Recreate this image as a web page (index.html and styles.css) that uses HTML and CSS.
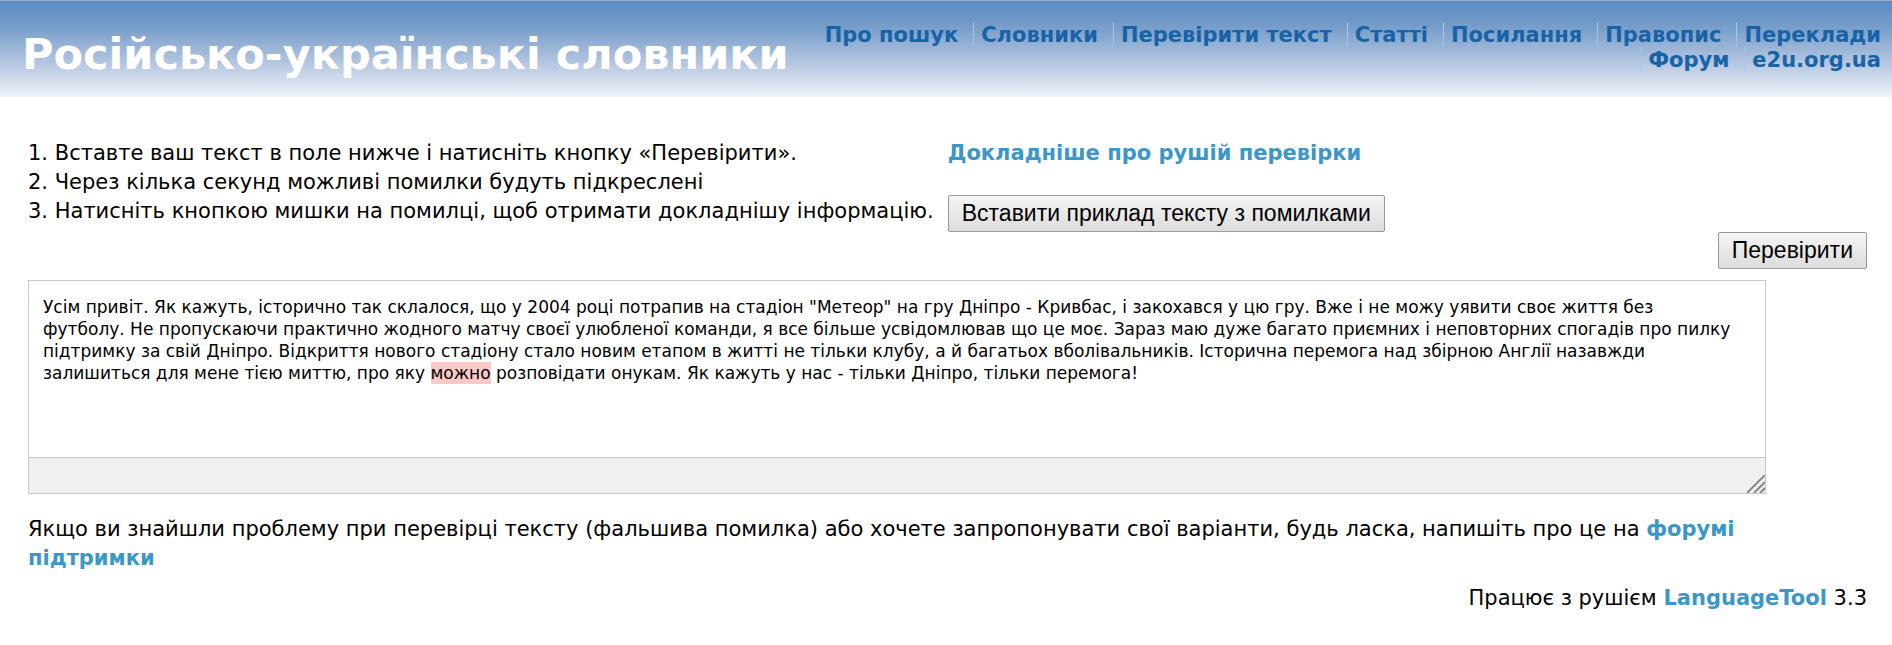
FILE: index.html
```html
<!DOCTYPE html>
<html lang="uk">
<head>
<meta charset="utf-8">
<title>Російсько-українські словники</title>
<link rel="stylesheet" href="styles.css">
</head>
<body>
<header class="header">
  <h1 class="title">Російсько-українські словники</h1>
  <nav class="nav">
    <ul class="nav-list">
      <li class="nav-item"><a href="#about">Про пошук</a></li>
      <li class="nav-item"><a href="#dictionaries">Словники</a></li>
      <li class="nav-item"><a href="#check">Перевірити текст</a></li>
      <li class="nav-item"><a href="#articles">Статті</a></li>
      <li class="nav-item"><a href="#links">Посилання</a></li>
      <li class="nav-item"><a href="#spelling">Правопис</a></li>
      <li class="nav-item"><a href="#translations">Переклади</a></li>
      <li class="nav-item"><a href="#forum">Форум</a></li>
      <li class="nav-item"><a href="#e2u">e2u.org.ua</a></li>
    </ul>
  </nav>
</header>
<main class="main">
  <div class="intro">
    <ol class="steps">
      <li>Вставте ваш текст в поле нижче і натисніть кнопку «Перевірити».</li>
      <li>Через кілька секунд можливі помилки будуть підкреслені</li>
      <li>Натисніть кнопкою мишки на помилці, щоб отримати докладнішу інформацію.</li>
    </ol>
    <div class="extras">
      <a class="link" href="#engine">Докладніше про рушій перевірки</a>
      <button class="button" type="button">Вставити приклад тексту з помилками</button>
    </div>
  </div>
  <div class="actions"><button class="button" type="button">Перевірити</button></div>
  <div class="editor">
    <div class="editor-text" contenteditable="true" role="textbox" aria-multiline="true" aria-label="Текст для перевірки" spellcheck="false">Усім привіт. Як кажуть, історично так склалося, що у 2004 році потрапив на стадіон "Метеор" на гру Дніпро - Кривбас, і закохався у цю гру. Вже і не можу уявити своє життя без<br>футболу. Не пропускаючи практично жодного матчу своєї улюбленої команди, я все більше усвідомлював що це моє. Зараз маю дуже багато приємних і неповторних спогадів про пилку<br>підтримку за свій Дніпро. Відкриття нового стадіону стало новим етапом в житті не тільки клубу, а й багатьох вболівальників. Історична перемога над збірною Англії назавжди<br>залишиться для мене тією миттю, про яку <mark class="error">можно</mark> розповідати онукам. Як кажуть у нас - тільки Дніпро, тільки перемога!</div>
    <div class="statusbar">
      <svg class="grip" width="18" height="18" viewBox="0 0 18 18" aria-hidden="true"><path d="M0 18L18 0M7 18L18 7M13 18L18 13"/></svg>
    </div>
  </div>
  <p class="note">Якщо ви знайшли проблему при перевірці тексту (фальшива помилка) або хочете запропонувати свої варіанти, будь ласка, напишіть про це на <a class="link" href="#support">форумі підтримки</a></p>
  <p class="engine">Працює з рушієм <a class="link" href="#languagetool">LanguageTool</a> 3.3</p>
</main>
</body>
</html>
```
FILE: styles.css
```css
* { box-sizing: border-box; }
body {
  margin: 0;
  background: #fff;
  color: #000;
  font: 21px/29px "DejaVu Sans", Verdana, sans-serif;
}
a { text-decoration: none; }
.header {
  display: flex;
  justify-content: space-between;
  gap: 24px;
  min-height: 97px;
  padding: 21px 11px 0 22px;
  border-top: 1px solid #9bb0c8;
  background: linear-gradient(#5a8bc0, #7ba0cb 30%, #b5c6e0 65%, #eff4f9);
}
.title {
  flex: none;
  margin: 0;
  padding-top: 6px;
  color: #fff;
  font-size: 43px;
  line-height: 52px;
}
.nav-list {
  display: flex;
  flex-wrap: wrap;
  justify-content: flex-end;
  margin: 0;
  padding: 0;
  list-style: none;
  font-size: 21px;
  font-weight: bold;
  line-height: 25px;
}
.nav-item {
  padding: 0 15px 0 7px;
  border-left: 1px solid #9cc8f4;
}
.nav-item:first-child { border-left: 0; }
.nav-item:nth-child(7), .nav-item:last-child { padding-right: 0; }
.nav-item a {
  display: block;
  padding-top: 2px;
  line-height: 23px;
  color: #1763a6;
}
.main { padding: 42px 25px 24px 28px; }
.intro { display: flex; gap: 14px; }
.steps {
  margin: 0;
  padding: 0;
  list-style-position: inside;
}
.extras {
  display: flex;
  flex-direction: column;
  align-items: flex-start;
  gap: 27px;
}
.link { color: #3c97c8; font-weight: bold; }
.button {
  padding: 3px 13px;
  border: 1px solid #999;
  border-radius: 2px;
  background: linear-gradient(#f5f5f5, #dcdcdc);
  color: #000;
  font: 23px/29px "Liberation Sans", Arial, sans-serif;
}
.actions { display: flex; justify-content: flex-end; }
.editor {
  width: 94.5%;
  margin-top: 11px;
  border: 1px solid #c8c8c8;
}
.editor-text {
  min-height: 176px;
  padding: 15px 14px;
  font-size: 17px;
  line-height: 22px;
  outline: 0;
}
.error { padding: 1px 0; background: #fcc8c8; color: inherit; }
.statusbar {
  display: flex;
  align-items: flex-end;
  justify-content: flex-end;
  height: 36px;
  border-top: 1px solid #c8c8c8;
  background: #f0f0ee;
}
.grip { fill: none; stroke: #888; stroke-width: 2; }
.note { margin: 21px 96px 11px 0; }
.engine { margin: 0; text-align: right; }
```
